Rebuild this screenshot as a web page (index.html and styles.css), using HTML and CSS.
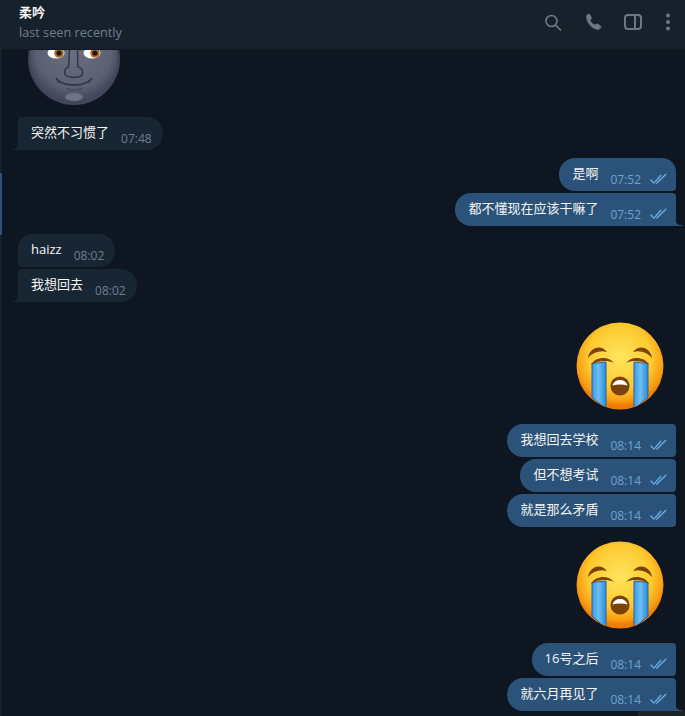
FILE: index.html
```html
<!DOCTYPE html>
<html lang="zh">
<head>
<meta charset="utf-8">
<title>柔吟</title>
<link rel="stylesheet" href="styles.css">
</head>
<body>
<svg class="defs" width="0" height="0" aria-hidden="true">
  <defs>
    <symbol id="checks" viewBox="0 0 18 12">
      <path d="M1 7l3.200 3.400L11.500 2M7 10.400L16.800 1" fill="none" stroke="currentColor" stroke-width="1.400" stroke-linecap="round" stroke-linejoin="round"/>
    </symbol>
    <radialGradient id="cryFace" cx="50%" cy="40%" r="56%">
      <stop offset="0" stop-color="#ffe55f"/>
      <stop offset=".66" stop-color="#fdc92f"/>
      <stop offset=".9" stop-color="#f99c11"/>
      <stop offset="1" stop-color="#ee7c07"/>
    </radialGradient>
    <linearGradient id="tear" x1="0" x2="1" y1="0" y2="0">
      <stop offset="0" stop-color="#3f97e2"/>
      <stop offset=".45" stop-color="#6cc0f4"/>
      <stop offset="1" stop-color="#2f8ad6"/>
    </linearGradient>
    <radialGradient id="moonFace" cx="50%" cy="42%" r="54%">
      <stop offset="0" stop-color="#6a6e80"/>
      <stop offset=".8" stop-color="#5c6072"/>
      <stop offset="1" stop-color="#484b5e"/>
    </radialGradient>
    <clipPath id="cryClip"><circle cx="44" cy="44" r="43"/></clipPath>
    <symbol id="cry" viewBox="0 0 88 88">
      <circle cx="44" cy="44" r="43.500" fill="url(#cryFace)"/>
      <g clip-path="url(#cryClip)">
        <path d="M16 41.500L30 40V87L16 75Z" fill="url(#tear)" stroke="#1f66b0" stroke-width="1"/>
        <path d="M58 40L72 41.500V75L58 87Z" fill="url(#tear)" stroke="#1f66b0" stroke-width="1"/>
      </g>
      <path d="M12 36C13 27 24 21 31 30C24 28 17 30 12 36Z" fill="#7c4206"/>
      <path d="M76 36C75 27 64 21 57 30C64 28 71 30 76 36Z" fill="#7c4206"/>
      <path d="M15 42.500C20 34 33 34 38 41C31 38 23 38.500 15 42.500Z" fill="#7c4206"/>
      <path d="M73 42.500C68 34 55 34 50 41C57 38 65 38.500 73 42.500Z" fill="#7c4206"/>
      <ellipse cx="44" cy="64" rx="9.600" ry="9.600" fill="#7c4206"/>
      <path d="M36.500 63.500C38 56 50 56 51.500 63.500C47 62 41 62 36.500 63.500Z" fill="#fff"/>
    </symbol>
  </defs>
</svg>

<div class="app">
  <div class="rail"><div class="rail-mark"></div></div>
  <main class="chat">
    <header class="top">
      <div class="peer">
        <div class="peer-name">柔吟</div>
        <div class="peer-status">last seen recently</div>
      </div>
      <div class="actions">
        <svg class="icon" viewBox="0 0 24 24"><circle cx="10.500" cy="11" r="5.500" fill="none" stroke="currentColor" stroke-width="1.600"/><path d="M14.800 15.300L19.500 20" stroke="currentColor" stroke-width="1.700" stroke-linecap="round"/></svg>
        <svg class="icon" viewBox="0 0 24 24"><path d="M5.500 4.500c1-.7 2.200-.4 2.700.6l1.100 2.200c.4.7.2 1.500-.4 2l-.9.8c.9 2.300 2.500 4 4.800 5l1-.8c.7-.5 1.500-.5 2.200 0l2.100 1.300c.9.6 1 1.900.3 2.700-.8.9-1.900 1.300-3.100 1.100C10 18.600 5 13.400 4.500 7.300c-.1-1.200.1-2.200 1-2.800z" fill="currentColor" stroke="currentColor" stroke-width=".6"/></svg>
        <svg class="icon" viewBox="0 0 24 24"><rect x="4" y="5" width="16" height="14" rx="3" fill="none" stroke="currentColor" stroke-width="2"/><path d="M14 5v14" stroke="currentColor" stroke-width="2"/></svg>
        <svg class="icon dots" viewBox="0 0 24 24"><circle cx="12" cy="5.500" r="2" fill="currentColor"/><circle cx="12" cy="12" r="2" fill="currentColor"/><circle cx="12" cy="18.500" r="2" fill="currentColor"/></svg>
      </div>
    </header>

    <div class="list">
      <section class="group in moon-group">
        <svg class="moon" viewBox="0 0 92 92">
          <circle cx="46" cy="46" r="46" fill="#43465a"/>
          <circle cx="46" cy="45" r="43.500" fill="url(#moonFace)"/>
          <ellipse cx="46" cy="84" rx="9" ry="4" fill="#6f7384"/>
          <ellipse cx="28" cy="40" rx="8.500" ry="5.500" fill="#fff"/>
          <ellipse cx="64" cy="40" rx="8.500" ry="5.500" fill="#fff"/>
          <circle cx="31" cy="40" r="4.800" fill="#b06d24"/>
          <circle cx="31" cy="40" r="2.600" fill="#1d1510"/>
          <circle cx="67" cy="40" r="4.800" fill="#b06d24"/>
          <circle cx="67" cy="40" r="2.600" fill="#1d1510"/>
          <path d="M41.500 25C41.500 40 41 48 40.500 54C36 55 35 62 40 63.500C44 64.500 49 64.500 52 63.500C56 62 55.500 55 50 54C49.500 48 49.500 40 49.500 25" fill="none" stroke="#35384b" stroke-width="1.600"/>
          <path d="M30 67.500C38 73.500 54 73.500 62 67.500M28.500 65.500L31 69M63.500 65.500L61 69" fill="none" stroke="#35384b" stroke-width="1.800" stroke-linecap="round"/>
          <path d="M39 75.500C43 77.500 50 77.500 54 75.500" fill="none" stroke="#4a4d60" stroke-width="1.800" stroke-linecap="round"/>
        </svg>
        <div class="bubble tail"><span class="txt">突然不习惯了</span><span class="time">07:48</span></div>
      </section>

      <section class="group out">
        <div class="bubble first"><span class="txt">是啊</span><span class="time">07:52</span><svg class="chk"><use href="#checks"/></svg></div>
        <div class="bubble tail"><span class="txt">都不懂现在应该干嘛了</span><span class="time">07:52</span><svg class="chk"><use href="#checks"/></svg></div>
      </section>

      <section class="group in">
        <div class="bubble first"><span class="txt">haizz</span><span class="time">08:02</span></div>
        <div class="bubble tail"><span class="txt">我想回去</span><span class="time">08:02</span></div>
      </section>

      <section class="group out after-long">
        <svg class="sticker"><use href="#cry"/></svg>
        <div class="bubble"><span class="txt">我想回去学校</span><span class="time">08:14</span><svg class="chk"><use href="#checks"/></svg></div>
        <div class="bubble"><span class="txt">但不想考试</span><span class="time">08:14</span><svg class="chk"><use href="#checks"/></svg></div>
        <div class="bubble"><span class="txt">就是那么矛盾</span><span class="time">08:14</span><svg class="chk"><use href="#checks"/></svg></div>
      </section>

      <section class="group out">
        <svg class="sticker"><use href="#cry"/></svg>
        <div class="bubble"><span class="txt">16号之后</span><span class="time">08:14</span><svg class="chk"><use href="#checks"/></svg></div>
        <div class="bubble tail"><span class="txt">就六月再见了</span><span class="time">08:14</span><svg class="chk"><use href="#checks"/></svg></div>
      </section>
    </div>
    <div class="corner"></div>
  </main>
</div>
</body>
</html>
```

FILE: styles.css
```css
* { box-sizing: border-box; }

html, body {
  margin: 0;
  height: 100%;
  background: #0e1621;
  overflow: hidden;
}

body {
  font-family: "Open Sans", "Noto Sans CJK SC", sans-serif;
  font-size: 13px;
  color: #f5f5f5;
}

.defs { position: absolute; }

.app {
  display: flex;
  height: 716px;
}

.rail {
  width: 2px;
  flex: none;
  background: #17212b;
  padding-top: 173px;
}

.rail-mark {
  height: 62px;
  background: #2b5278;
}

.chat {
  flex: 1;
  min-width: 0;
  display: flex;
  flex-direction: column;
  position: relative;
}

.top {
  height: 50px;
  flex: none;
  display: flex;
  align-items: center;
  justify-content: space-between;
  padding: 0 5px 0 17px;
  background: #17212b;
  border-bottom: 1px solid #101921;
  position: relative;
  z-index: 1;
}

.peer-name {
  font-weight: 700;
  font-size: 13px;
  line-height: 16px;
  color: #f5f5f5;
  margin-top: -4px;
}

.peer-status {
  font-size: 12.7px;
  line-height: 18px;
  margin-top: 3px;
  color: #6d7f8f;
}

.actions {
  display: flex;
  align-items: center;
  gap: 17px;
  color: #6c7883;
  margin-top: -5px;
}

.icon {
  width: 24px;
  height: 24px;
  display: block;
}

.actions .icon:nth-child(3) { margin-left: -2px; }
.actions .dots { margin-left: -6px; }

.list {
  flex: 1;
  min-height: 0;
  overflow: hidden;
  display: flex;
  flex-direction: column;
}

.group {
  display: flex;
  flex-direction: column;
  gap: 2px;
  margin-top: 8px;
}

.group.in { align-items: flex-start; padding-left: 16px; }
.group.out { align-items: flex-end; padding-right: 9px; }

.moon-group { margin-top: -37px; }
.after-long { margin-top: 20px; }

.moon {
  width: 92px;
  height: 92px;
  display: block;
  flex: none;
  margin: 0 0 10px 10px;
}

.sticker {
  width: 88px;
  height: 88px;
  display: block;
  flex: none;
  margin: 0 12px 12px 0;
}

.out .sticker:first-child { margin-top: 6px; }
.after-long .sticker:first-child { margin-top: 0; }

.bubble {
  position: relative;
  height: 33px;
  display: flex;
  align-items: flex-start;
  padding: 6px 11px 0 13px;
  border-radius: 4px 16px 16px 4px;
  background: #182533;
}

.in .bubble.first { border-top-left-radius: 14px; }

.out .bubble {
  background: #2b5278;
  padding-right: 9px;
  border-radius: 16px 4px 4px 16px;
}

.out .bubble.first { border-top-right-radius: 14px; }

.bubble.tail::after {
  content: "";
  position: absolute;
  bottom: 0;
  width: 6px;
  height: 9px;
}

.in .bubble.tail { border-bottom-left-radius: 0; }
.out .bubble.tail { border-bottom-right-radius: 0; }

.in .bubble.tail::after {
  left: -6px;
  background: radial-gradient(circle at 0 0, transparent 8px, #182533 8.5px);
}

.out .bubble.tail::after {
  right: -6px;
  background: radial-gradient(circle at 100% 0, transparent 8px, #2b5278 8.5px);
}

.txt {
  font-size: 13px;
  line-height: 18px;
  color: #f5f5f5;
  white-space: nowrap;
}

.time {
  font-size: 12px;
  line-height: 16px;
  margin: 8px 0 0 12px;
  color: #6d7f8f;
  white-space: nowrap;
}

.out .time { color: #6da3d3; }

.chk {
  width: 17px;
  height: 12px;
  flex: none;
  margin: 9px 0 0 9px;
  color: #68aee8;
}

.corner {
  position: absolute;
  right: 0;
  bottom: 0;
  width: 47px;
  height: 5px;
  background: #1f242a;
}
```
